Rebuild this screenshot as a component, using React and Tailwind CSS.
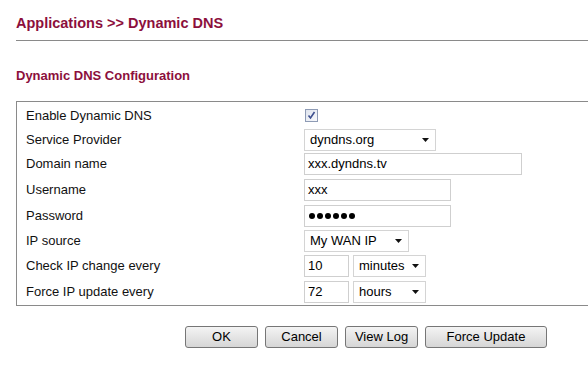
import React from 'react';

const Arrow = () => (
    <svg width="7" height="4" viewBox="0 0 7 4" className="shrink-0">
        <path d="M0 0h7L3.5 4z" fill="#111" />
    </svg>
);

const Select = ({ value, width }) => (
    <div className={`${width} h-[22px] flex items-center justify-between pl-[5px] pr-[6px] border border-[#d4d4d4] bg-white text-[13px] text-black`}>
        <span>{value}</span>
        <Arrow />
    </div>
);

const Input = ({ value, width, children }) => (
    <div className={`${width} h-[22px] flex items-center px-[3px] border border-[#cfcfcf] bg-white text-[13px] text-black`}>
        {children || value}
    </div>
);

const Row = ({ label, h, children }) => (
    <div className={`flex items-center ${h}`}>
        <div className="w-[278px] text-[13px] text-[#111]">{label}</div>
        <div className="flex items-center gap-[4px]">{children}</div>
    </div>
);

const Button = ({ children, width }) => (
    <button className={`${width} h-[22px] text-[13px] text-black border border-[#767676] rounded-[3px] bg-gradient-to-b from-[#f4f4f4] to-[#d6d6d6]`}>
        {children}
    </button>
);

const App = () => {
    return (
        <div className="w-[588px] h-[367px] bg-white pl-4 font-['Liberation_Sans',Arial,sans-serif] overflow-hidden">
            <div className="pt-[14px] text-[14.5px] leading-[18px] font-bold text-[#8c0f3c]">
                Applications &gt;&gt; Dynamic DNS
            </div>
            <div className="mt-[8px] h-px bg-[#8a8a8a]" />

            <div className="mt-[27px] text-[13px] leading-[16px] font-bold text-[#8c0f3c]">
                Dynamic DNS Configuration
            </div>

            <div className="mt-[17px] border border-r-0 border-[#8a8a8a] pl-[9px] pt-[1px]">
                <Row label="Enable Dynamic DNS" h="h-[25px]">
                    <div className="ml-[1px] w-[13px] h-[13px] border border-[#8e9bb5] bg-gradient-to-br from-[#dfe4ee] to-[#f8f9fc] flex items-center justify-center">
                        <svg width="9" height="9" viewBox="0 0 9 9">
                            <path d="M1.5 4.5l2 2.5L7.5 1" fill="none" stroke="#3d4f8f" strokeWidth="1.6" />
                        </svg>
                    </div>
                </Row>
                <Row label="Service Provider" h="h-[23px]">
                    <Select value="dyndns.org" width="w-[132px]" />
                </Row>
                <Row label="Domain name" h="h-[26px]">
                    <Input value="xxx.dyndns.tv" width="w-[218px]" />
                </Row>
                <Row label="Username" h="h-[26px]">
                    <Input value="xxx" width="w-[147px]" />
                </Row>
                <Row label="Password" h="h-[26px]">
                    <Input width="w-[147px]">
                        <div className="flex gap-[2px] pl-[1px]">
                            {[0, 1, 2, 3, 4, 5].map((i) => (
                                <span key={i} className="w-[6px] h-[6px] rounded-full bg-black" />
                            ))}
                        </div>
                    </Input>
                </Row>
                <Row label="IP source" h="h-[24px]">
                    <Select value="My WAN IP" width="w-[105px]" />
                </Row>
                <Row label="Check IP change every" h="h-[26px]">
                    <Input value="10" width="w-[45px]" />
                    <Select value="minutes" width="w-[73px]" />
                </Row>
                <Row label="Force IP update every" h="h-[26px]">
                    <Input value="72" width="w-[45px]" />
                    <Select value="hours" width="w-[73px]" />
                </Row>
            </div>

            <div className="mt-[20px] pl-[169px] flex gap-[7px]">
                <Button width="w-[73px]">OK</Button>
                <Button width="w-[73px]">Cancel</Button>
                <Button width="w-[73px]">View Log</Button>
                <Button width="w-[122px]">Force Update</Button>
            </div>
        </div>
    );
};

export default App;
